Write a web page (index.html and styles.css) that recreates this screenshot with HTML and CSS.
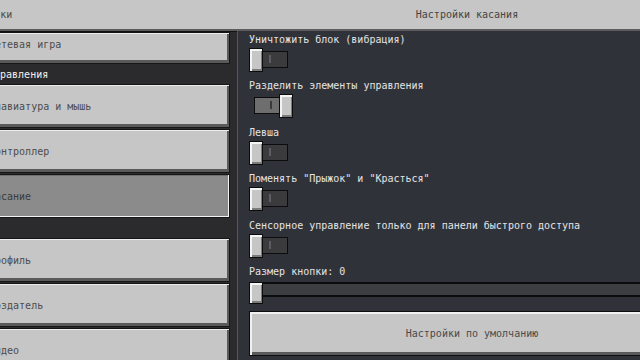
FILE: index.html
```html
<!DOCTYPE html>
<html lang="ru">
<head>
    <meta charset="UTF-8">
    <meta name="viewport" content="width=device-width, initial-scale=1.0">
    <title>Настройки касания</title>
    <link rel="stylesheet" href="styles.css">
</head>
<body>
    <div class="screen">
        <!-- Верхняя панель -->
        <div class="topbar">
            <div class="topbar-left">Настройки</div>
            <div class="topbar-title">Настройки касания</div>
        </div>

        <div class="content">
            <!-- Левое меню -->
            <div class="sidebar">
                <button class="menu-btn short">Сетевая игра</button>
                <div class="section-title">Управления</div>
                <button class="menu-btn">Клавиатура и мышь</button>
                <button class="menu-btn">Контроллер</button>
                <button class="menu-btn selected">Касание</button>
                <div class="section-gap"></div>
                <button class="menu-btn">Профиль</button>
                <button class="menu-btn">Создатель</button>
                <button class="menu-btn">Видео</button>
            </div>

            <!-- Настройки -->
            <div class="panel">
                <div class="option">
                    <div class="option-label">Уничтожить блок (вибрация)</div>
                    <div class="toggle"><div class="track"></div><div class="knob"></div></div>
                </div>
                <div class="option">
                    <div class="option-label">Разделить элементы управления</div>
                    <div class="toggle on"><div class="track"></div><div class="knob"></div></div>
                </div>
                <div class="option">
                    <div class="option-label">Левша</div>
                    <div class="toggle"><div class="track"></div><div class="knob"></div></div>
                </div>
                <div class="option">
                    <div class="option-label">Поменять "Прыжок" и "Красться"</div>
                    <div class="toggle"><div class="track"></div><div class="knob"></div></div>
                </div>
                <div class="option">
                    <div class="option-label">Сенсорное управление только для панели быстрого доступа</div>
                    <div class="toggle"><div class="track"></div><div class="knob"></div></div>
                </div>
                <div class="option">
                    <div class="option-label">Размер кнопки: 0</div>
                    <div class="slider"><div class="slider-track"></div><div class="knob"></div></div>
                </div>
                <button class="default-btn">Настройки по умолчанию</button>
            </div>
        </div>
    </div>
</body>
</html>
```

FILE: styles.css
```css
* {
    margin: 0;
    padding: 0;
    box-sizing: border-box;
}

body {
    width: 640px;
    height: 360px;
    overflow: hidden;
    background-color: #2b2b2e;
    font-family: 'DejaVu Sans Mono', 'Liberation Mono', monospace;
    font-size: 10px;
}

.screen {
    margin-left: -30px;
    width: 740px;
}

/* верхняя панель */
.topbar {
    height: 31px;
    display: grid;
    grid-template-columns: 267px 460px;
    align-items: center;
    background: #c6c6c6;
    border-bottom: 2px solid #5c5c5c;
    box-shadow: 0 1px 0 #111;
    color: #4a4a4a;
    padding-bottom: 1px;
}

.topbar-left {
    margin-left: -12px;
}

.topbar-title {
    text-align: center;
    color: #444;
}

.content {
    display: grid;
    grid-template-columns: 267px 470px;
    height: 329px;
}

/* левое меню */
.sidebar {
    display: flex;
    flex-direction: column;
    gap: 1px;
    width: 260px;
    padding-top: 1px;
}

.menu-btn {
    height: 44px;
    flex-shrink: 0;
    background: #c6c6c6;
    border: 1px solid #161616;
    box-shadow: inset 0 1px 0 #ececec, inset 0 -3px 0 #5a5a5a, inset -2px 0 0 #5a5a5a;
    font-family: inherit;
    font-size: 10px;
    color: #4c4c4c;
    text-align: left;
    padding-left: 18px;
}

.menu-btn.short {
    height: 32px;
    padding-bottom: 8px;
}

.menu-btn.selected {
    background: #8b8b8b;
    color: #3a3a3a;
    box-shadow: inset -1px -1px 0 #f2f2f2, inset 0 1px 0 #6e6e6e;
}

.section-title {
    height: 19px;
    line-height: 19px;
    padding-left: 18px;
    color: #f2f2f2;
    margin-bottom: -1px;
}

.section-gap {
    height: 18px;
    flex-shrink: 0;
}

/* правая панель */
.panel {
    background: #30323a;
    border-left: 1px solid #55575c;
    padding: 3px 12px 0 11px;
    display: flex;
    flex-direction: column;
    gap: 8.4px;
}

.option-label {
    line-height: 12px;
    color: #e4e4e4;
    white-space: nowrap;
}

.toggle {
    position: relative;
    width: 39px;
    height: 24px;
    margin-top: 2px;
}

.toggle .track {
    position: absolute;
    left: 0;
    top: 3px;
    width: 39px;
    height: 17px;
    background: #3b3b3d;
    border: 1px solid #0c0c0c;
}

.toggle .track::after {
    content: '';
    position: absolute;
    left: 19px;
    top: 3px;
    width: 2px;
    height: 8px;
    background: #5e5e60;
}

.knob {
    position: absolute;
    left: 0;
    top: 0;
    width: 14px;
    height: 24px;
    background: #c6c6c6;
    border: 1px solid #0c0c0c;
    box-shadow: inset 2px 2px 0 #f4f4f4, inset -1px -2px 0 #7c7c7c;
}

.toggle.on {
    margin-left: 5px;
}

.toggle.on .track {
    background: #6e6e6e;
}

.toggle.on .track::after {
    left: 15px;
    background: #3a3a3a;
}

.toggle.on .knob {
    left: 25px;
}

.slider {
    position: relative;
    height: 22px;
    margin-top: 4px;
    margin-right: -12px;
}

.slider-track {
    margin-top: 3px;
    height: 15px;
    background: #3d3e41;
    border-top: 2px solid #0c0c0c;
    border-bottom: 2px solid #0c0c0c;
    border-left: 1px solid #0c0c0c;
}

.slider .knob {
    height: 22px;
}

.default-btn {
    height: 45px;
    margin-top: -1px;
    background: #c6c6c6;
    border: 1px solid #0c0c0c;
    box-shadow: inset 2px 2px 0 #f0f0f0, inset 0 -3px 0 #5a5a5a;
    font-family: inherit;
    font-size: 10px;
    color: #4a4a4a;
}
```
